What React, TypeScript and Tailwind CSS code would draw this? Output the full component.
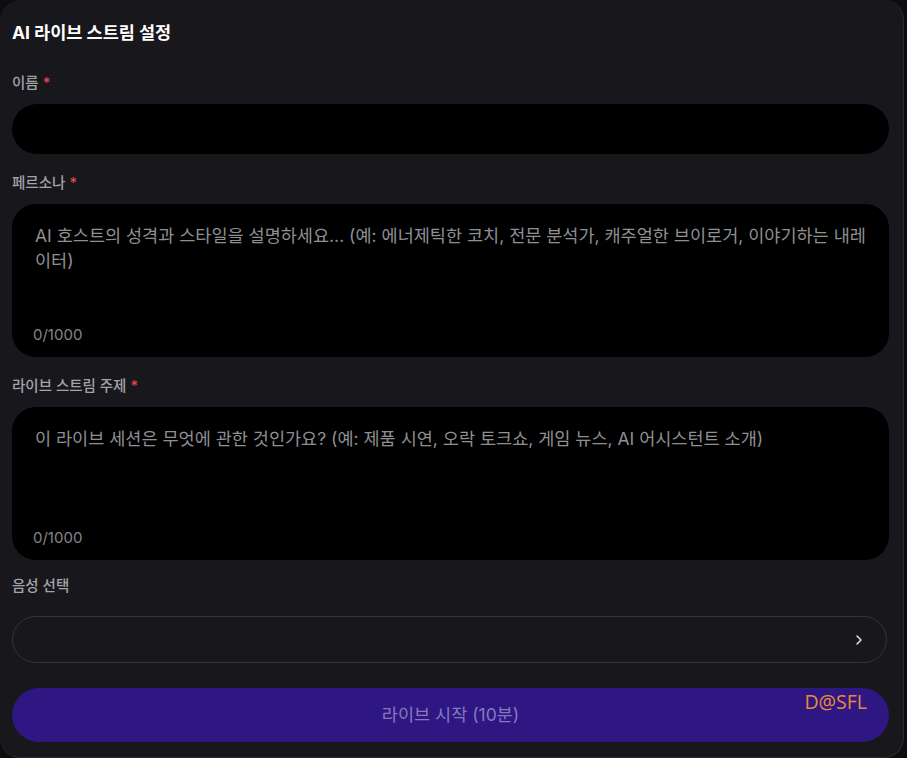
import React from "react";
import { ChevronRight } from "lucide-react";

const font = { fontFamily: '"Inter", "Noto Sans CJK KR", sans-serif' };

function Label({ text, required }: { text: string; required?: boolean }) {
  return (
    <div className="text-[14.5px] leading-[20px] font-medium text-[#a3a3aa]">
      {text}
      {required && <span className="text-[#e5484d] ml-1">*</span>}
    </div>
  );
}

function TextBox({ placeholder }: { placeholder: string }) {
  return (
    <div className="relative h-[153px] rounded-[24px] bg-black pl-[23px] pr-[22px] pt-[19px]">
      <div className="text-[17.5px] leading-[25px] text-[#8f8f94]">{placeholder}</div>
      <div className="absolute left-[21px] bottom-[12px] text-[15px] leading-[20px] text-[#85858a]">0/1000</div>
    </div>
  );
}

export default function App() {
  return (
    <div className="w-[907px] h-[758px] bg-[#0d0d10] overflow-hidden" style={font}>
      <div className="w-[904px] h-[758px] rounded-[20px] border-r border-b border-[#2c2b31] bg-[#18171c] pl-[12px] pr-[14px] pt-[21px]">
        <h1 className="text-[17.5px] leading-[24px] font-bold text-white">AI 라이브 스트림 설정</h1>

        <div className="mt-[28px]">
          <Label text="이름" required />
        </div>
        <div className="mt-[11px] h-[50px] rounded-full bg-black" />

        <div className="mt-[19px]">
          <Label text="페르소나" required />
        </div>
        <div className="mt-[11px]">
          <TextBox placeholder="AI 호스트의 성격과 스타일을 설명하세요... (예: 에너제틱한 코치, 전문 분석가, 캐주얼한 브이로거, 이야기하는 내레이터)" />
        </div>

        <div className="mt-[19px]">
          <Label text="라이브 스트림 주제" required />
        </div>
        <div className="mt-[11px]">
          <TextBox placeholder="이 라이브 세션은 무엇에 관한 것인가요? (예: 제품 시연, 오락 토크쇼, 게임 뉴스, AI 어시스턴트 소개)" />
        </div>

        <div className="mt-[16px]">
          <Label text="음성 선택" />
        </div>
        <div className="mt-[20px] h-[47px] mr-[2px] rounded-full border border-[#36353b] flex items-center justify-end pr-[19px]">
          <ChevronRight size={16} strokeWidth={2.2} className="text-[#e4e4e7]" />
        </div>

        <div className="relative mt-[25px] h-[54px] rounded-full bg-[#2e1783] flex items-center justify-center">
          <span className="text-[17.5px] text-[#8677c0]">라이브 시작 (10분)</span>
          <span
            className="absolute right-[22px] top-[1px] text-[19.5px] leading-[26px] text-[#e88a3d]"
            style={{ fontFamily: '"Open Sans", sans-serif' }}
          >
            D@SFL
          </span>
        </div>
      </div>
    </div>
  );
}
